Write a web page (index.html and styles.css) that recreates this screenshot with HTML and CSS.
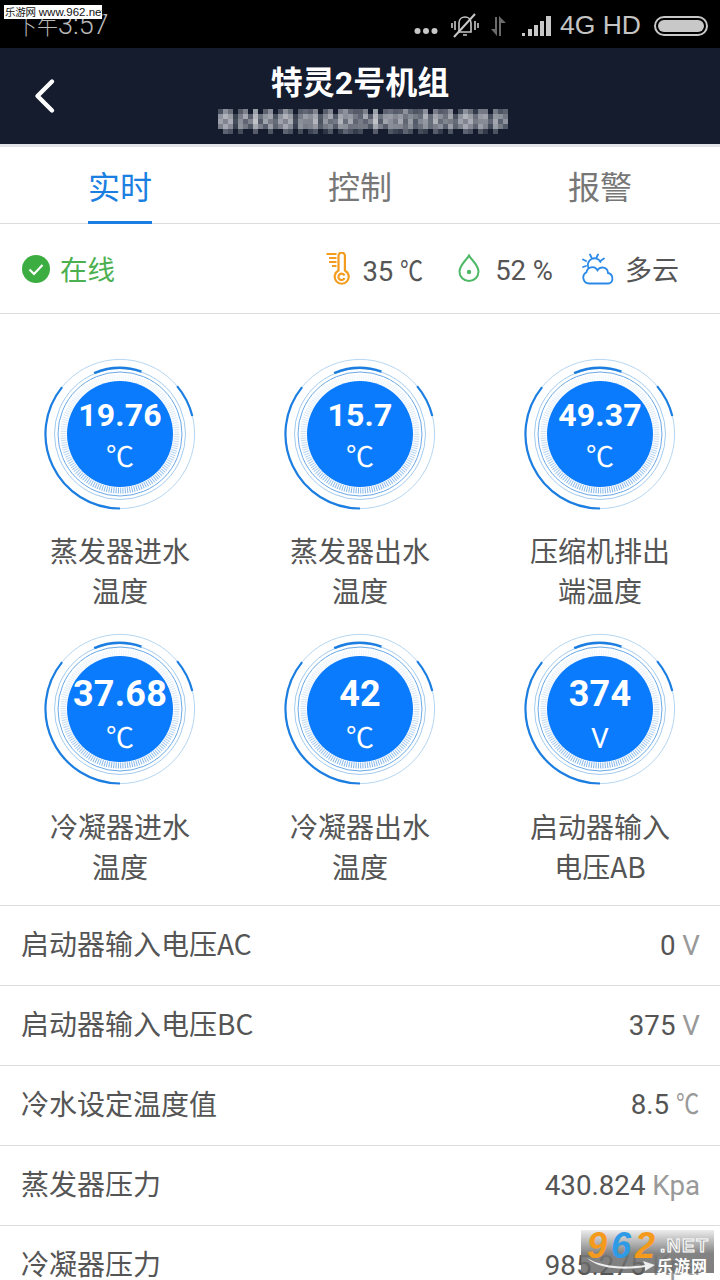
FILE: index.html
```html
<!DOCTYPE html>
<html lang="zh">
<head>
<meta charset="utf-8">
<title>特灵2号机组</title>
<link rel="stylesheet" href="styles.css">
</head>
<body>
<svg class="defs" width="0" height="0">
  <defs>
    <linearGradient id="tick-fade" gradientUnits="userSpaceOnUse" x1="0" y1="16" x2="0" y2="136">
      <stop offset="0" stop-color="#f0f6fc"/>
      <stop offset=".5" stop-color="#cfe2f6"/>
      <stop offset="1" stop-color="#7fb3e8"/>
    </linearGradient>
    <symbol id="gauge-ring" viewBox="0 0 152 152">
      <circle cx="76" cy="76" r="74.6" fill="none" stroke="#b5d6f3" stroke-width="1"/>
      <circle cx="76" cy="76" r="65.500" fill="none" stroke="#a4cbef" stroke-width="1"/>
      <circle cx="76" cy="76" r="62" fill="none" stroke="#6aa9e6" stroke-width="1"/>
      <circle cx="76" cy="76" r="56.500" fill="none" stroke="url(#tick-fade)" stroke-width="6" stroke-dasharray="1 1.3"/>
      <path d="M18.100 29.100A74.500 74.500 0 0 0 76 150.500" fill="none" stroke="#1b7ee0" stroke-width="2.200"/>
      <path d="M133.100 28.100A74.500 74.500 0 0 1 148.300 58" fill="none" stroke="#1b7ee0" stroke-width="2.200"/>
      <path d="M50.200 15.200A66 66 0 0 1 97.500 13.600" fill="none" stroke="#1b7ee0" stroke-width="2.500"/>
      <circle cx="76" cy="76" r="53" fill="#0a7bfc"/>
    </symbol>
    <pattern id="mosaic" width="60" height="25" patternUnits="userSpaceOnUse">
      <rect width="5" height="5" x="0" y="0" fill="#4a5160"/><rect width="5" height="5" x="5" y="0" fill="#8d919b"/><rect width="5" height="5" x="10" y="0" fill="#6b707d"/><rect width="5" height="5" x="20" y="0" fill="#565c6a"/><rect width="5" height="5" x="25" y="0" fill="#7c818c"/><rect width="5" height="5" x="35" y="0" fill="#9a9ea7"/><rect width="5" height="5" x="45" y="0" fill="#5c6270"/><rect width="5" height="5" x="50" y="0" fill="#888c97"/>
      <rect width="5" height="5" x="0" y="5" fill="#8f939d"/><rect width="5" height="5" x="5" y="5" fill="#b0b3ba"/><rect width="5" height="5" x="10" y="5" fill="#9a9da6"/><rect width="5" height="5" x="15" y="5" fill="#3d4452"/><rect width="5" height="5" x="20" y="5" fill="#777c88"/><rect width="5" height="5" x="25" y="5" fill="#a5a8b0"/><rect width="5" height="5" x="30" y="5" fill="#5a606e"/><rect width="5" height="5" x="35" y="5" fill="#b3b6bc"/><rect width="5" height="5" x="40" y="5" fill="#6d727f"/><rect width="5" height="5" x="45" y="5" fill="#92969f"/><rect width="5" height="5" x="50" y="5" fill="#a2a5ae"/><rect width="5" height="5" x="55" y="5" fill="#4c5361"/>
      <rect width="5" height="5" x="0" y="10" fill="#9ea1aa"/><rect width="5" height="5" x="5" y="10" fill="#80858f"/><rect width="5" height="5" x="10" y="10" fill="#a9acb4"/><rect width="5" height="5" x="15" y="10" fill="#454c5a"/><rect width="5" height="5" x="20" y="10" fill="#8b8f99"/><rect width="5" height="5" x="25" y="10" fill="#5f6573"/><rect width="5" height="5" x="30" y="10" fill="#7f848f"/><rect width="5" height="5" x="35" y="10" fill="#c0c2c8"/><rect width="5" height="5" x="40" y="10" fill="#555b69"/><rect width="5" height="5" x="45" y="10" fill="#9fa3ab"/><rect width="5" height="5" x="50" y="10" fill="#777c87"/><rect width="5" height="5" x="55" y="10" fill="#666b78"/>
      <rect width="5" height="5" x="0" y="15" fill="#7c818c"/><rect width="5" height="5" x="5" y="15" fill="#a5a8b0"/><rect width="5" height="5" x="10" y="15" fill="#888c96"/><rect width="5" height="5" x="15" y="15" fill="#3a4150"/><rect width="5" height="5" x="20" y="15" fill="#8f939c"/><rect width="5" height="5" x="25" y="15" fill="#727783"/><rect width="5" height="5" x="30" y="15" fill="#4e5563"/><rect width="5" height="5" x="35" y="15" fill="#a6a9b1"/><rect width="5" height="5" x="40" y="15" fill="#7a7f8a"/><rect width="5" height="5" x="45" y="15" fill="#585e6c"/><rect width="5" height="5" x="50" y="15" fill="#9b9ea7"/><rect width="5" height="5" x="55" y="15" fill="#5d6370"/>
      <rect width="5" height="5" x="5" y="20" fill="#5d6370"/><rect width="5" height="5" x="10" y="20" fill="#4a5160"/><rect width="5" height="5" x="20" y="20" fill="#444b59"/><rect width="5" height="5" x="35" y="20" fill="#565c6a"/><rect width="5" height="5" x="50" y="20" fill="#4e5563"/>
    </pattern>
    <pattern id="mosaic-wide" href="#mosaic" width="85" height="25" patternUnits="userSpaceOnUse"></pattern>
  </defs>
</svg>

<div class="phone">
  <div class="statusbar">
    <span class="clock"><span class="clock-cn">下午</span>3:57</span>
    <div class="status-right">
      <svg class="dots" width="24" height="8" viewBox="0 0 24 8"><circle cx="3.500" cy="4" r="3" fill="#c8c8c8"/><circle cx="12" cy="4" r="3" fill="#c8c8c8"/><circle cx="20.500" cy="4" r="3" fill="#c8c8c8"/></svg>
      <svg class="mute" width="30" height="26" viewBox="0 0 30 26" fill="none" stroke="#c8c8c8" stroke-width="1.600"><path d="M9 19V10c0-4 3-6 6-6s6 2 6 6v9H9zM13 22h4"/><path d="M5 8v9M2 10v5M25 8v9M28 10v5"/><path d="M25 1L4 24" stroke-width="2"/></svg>
      <svg class="arrows" width="20" height="20" viewBox="0 0 20 20" fill="#6a6a6a"><path d="M5 1h2v19L1 13h4zM9 0l7 7h-5v13H9z"/></svg>
      <svg class="signal" width="30" height="20" viewBox="0 0 30 20" fill="#c8c8c8"><rect x="0" y="17" width="3" height="3"/><rect x="6" y="13" width="4" height="7"/><rect x="12" y="9" width="4" height="11"/><rect x="18" y="5" width="4" height="15"/><rect x="24" y="0" width="5" height="20"/></svg>
      <span class="net">4G HD</span>
      <div class="battery"><div class="battery-fill"></div></div>
    </div>
    <div class="wm-top"><span class="wm-top-cn">乐游网</span> www.962.net</div>
  </div>

  <header class="header">
    <svg class="back" width="24" height="36" viewBox="0 0 24 36" fill="none" stroke="#fff" stroke-width="4.400" stroke-linecap="round" stroke-linejoin="round"><path d="M19 3.500L4.500 18 19 32.500"/></svg>
    <h1 class="title">特灵2号机组</h1>
    <svg class="mosaic" width="290" height="25" viewBox="0 0 290 25"><rect width="290" height="25" fill="url(#mosaic)"/><rect width="290" height="25" fill="url(#mosaic-wide)" opacity=".55"/></svg>
  </header>

  <nav class="tabs">
    <div class="tab tab-active"><span class="tab-label">实时</span></div>
    <div class="tab"><span class="tab-label">控制</span></div>
    <div class="tab"><span class="tab-label">报警</span></div>
  </nav>

  <section class="infobar">
    <div class="online">
      <svg width="28" height="28" viewBox="0 0 28 28"><circle cx="14" cy="14" r="14" fill="#3cae41"/><path d="M7.500 14.500l4.500 4.500 8.500-9" fill="none" stroke="#fff" stroke-width="2.200"/></svg>
      <span class="online-text">在线</span>
    </div>
    <div class="metrics">
      <div class="metric metric-temp">
        <svg width="25" height="33" viewBox="0 0 25 33" fill="none" stroke="#f39c1f" stroke-width="2.200"><path d="M.5 2h10M3 6h7.500M3 10h7.500M6 14h4.500"/><path d="M12.500 18.500V3.800a3.200 3.200 0 0 1 6.400 0V18.500a7 7 0 1 1-6.400 0z"/><path d="M18.500 23.500a3.200 3.200 0 1 0 0 2.600"/></svg>
        <span>35 <span class="deg deg-sm">℃</span></span>
      </div>
      <div class="metric metric-hum">
        <svg width="22" height="29" viewBox="0 0 22 29" fill="none" stroke="#4db967" stroke-width="2"><path d="M11 1.500c2 4 9.500 9.500 9.500 16a9.500 9.500 0 0 1-19 0c0-6.500 7.500-12 9.500-16z"/><circle cx="11" cy="18" r="2.200" fill="#4db967" stroke="none"/></svg>
        <span class="hum-text">52 %</span>
      </div>
      <div class="metric metric-sky">
        <svg width="33" height="32" viewBox="0 0 33 32" fill="none" stroke="#2b8ae8" stroke-width="1.800" stroke-linecap="round"><path d="M8 1.500l1.500 3M16 1.500l-1.500 3M1 6.500l3 1.500M22 5.500l-3 2M1 14l3-1"/><path d="M6.500 15a6.500 6.500 0 0 1 12-6"/><path d="M7 30.500a6 6 0 0 1-2.500-11.300c.5-5 8-7.500 11-2 3-4.500 10-3 10.500 2.800 5.500 1 6 9.500.500 10.500z"/></svg>
        <span class="sky-text">多云</span>
      </div>
    </div>
  </section>

  <section class="gauges">
    <div class="gauge-cell">
      <div class="gauge"><svg class="gauge-ring"><use href="#gauge-ring"/></svg><div class="gauge-text"><span class="gauge-value">19.76</span><span class="gauge-unit">℃</span></div></div>
      <p class="gauge-label">蒸发器进水<br>温度</p>
    </div>
    <div class="gauge-cell">
      <div class="gauge"><svg class="gauge-ring"><use href="#gauge-ring"/></svg><div class="gauge-text"><span class="gauge-value">15.7</span><span class="gauge-unit">℃</span></div></div>
      <p class="gauge-label">蒸发器出水<br>温度</p>
    </div>
    <div class="gauge-cell">
      <div class="gauge"><svg class="gauge-ring"><use href="#gauge-ring"/></svg><div class="gauge-text"><span class="gauge-value">49.37</span><span class="gauge-unit">℃</span></div></div>
      <p class="gauge-label">压缩机排出<br>端温度</p>
    </div>
    <div class="gauge-cell gauge-cell-big">
      <div class="gauge"><svg class="gauge-ring"><use href="#gauge-ring"/></svg><div class="gauge-text"><span class="gauge-value">37.68</span><span class="gauge-unit">℃</span></div></div>
      <p class="gauge-label">冷凝器进水<br>温度</p>
    </div>
    <div class="gauge-cell gauge-cell-big">
      <div class="gauge"><svg class="gauge-ring"><use href="#gauge-ring"/></svg><div class="gauge-text"><span class="gauge-value">42</span><span class="gauge-unit">℃</span></div></div>
      <p class="gauge-label">冷凝器出水<br>温度</p>
    </div>
    <div class="gauge-cell gauge-cell-big">
      <div class="gauge"><svg class="gauge-ring"><use href="#gauge-ring"/></svg><div class="gauge-text"><span class="gauge-value">374</span><span class="gauge-unit">V</span></div></div>
      <p class="gauge-label">启动器输入<br>电压AB</p>
    </div>
  </section>

  <section class="list">
    <div class="row"><span class="row-label">启动器输入电压AC</span><span class="row-value">0 <em>V</em></span></div>
    <div class="row"><span class="row-label">启动器输入电压BC</span><span class="row-value">375 <em>V</em></span></div>
    <div class="row"><span class="row-label">冷水设定温度值</span><span class="row-value row-value-deg">8.5 <em class="deg">℃</em></span></div>
    <div class="row"><span class="row-label">蒸发器压力</span><span class="row-value">430.824 <em>Kpa</em></span></div>
    <div class="row"><span class="row-label">冷凝器压力</span><span class="row-value">985.275 <em>Kpa</em></span></div>
  </section>

  <div class="wm-bottom">
    <svg class="wm-swoosh" width="70" height="14" viewBox="0 0 70 14"><path d="M0 0c14 9 40 10 58 7l-2-4 12 4-10 6 0-4C40 12 12 12 0 0z" fill="#eee"/></svg>
    <div class="wm-logo"><span class="wm-o">9</span><span class="wm-b">6</span><span class="wm-o">2</span></div>
    <div class="wm-net">.NET</div>
    <div class="wm-cn">乐游网</div>
  </div>
</div>
</body>
</html>
```

FILE: styles.css
```css
* { box-sizing: border-box; }
html, body { margin: 0; padding: 0; background: #fff; }
body { font-family: Roboto, "Noto Sans CJK SC", sans-serif; color: #555; }
.defs { position: absolute; }
.phone { position: relative; width: 720px; height: 1280px; overflow: hidden; background: #fff; }

/* status bar */
.statusbar { position: relative; height: 48px; background: #000; display: flex; align-items: center; justify-content: space-between; padding: 3px 12px 0 16px; color: #c8c8c8; }
.clock { font-size: 27px; font-weight: 300; color: #b9b9b9; line-height: 1; }
.clock-cn { font-size: 21px; }
.status-right { display: flex; align-items: center; }
.dots { margin: 10px 12px 0 0; }
.mute { margin-right: 10px; }
.arrows { margin-right: 12px; }
.signal { margin: 0 8px 0 0; }
.net { font-family: "Liberation Sans", sans-serif; font-size: 26.500px; margin-right: 13px; color: #c4c4c4; line-height: 1; }
.battery { width: 54px; height: 20px; border: 2px solid #c8c8c8; border-radius: 10px; padding: 2px; }
.battery-fill { width: 100%; height: 100%; border-radius: 6px; background: #c8c8c8; }
.wm-top { position: absolute; left: 4px; top: 5px; width: 98px; height: 14px; background: #fff; color: #111; font: 11.500px/14px "Liberation Sans", sans-serif; white-space: nowrap; padding-left: 1px; }
.wm-top-cn { font-family: "Noto Sans CJK SC", sans-serif; font-size: 10.500px; letter-spacing: -.3px; }

/* header */
.header { position: relative; height: 99px; background: #141c2e; border-bottom: 3px solid #e1e3e8; display: flex; flex-direction: column; align-items: center; padding-top: 15px; }
.back { position: absolute; left: 33px; top: 30px; }
.title { margin: 0; font-size: 32px; line-height: 40px; font-weight: 700; color: #fff; }
.mosaic { margin-top: 6px; margin-left: 5px; }

/* tabs */
.tabs { display: grid; grid-template-columns: repeat(3, 240px); height: 77px; border-bottom: 1px solid #ddd; }
.tab { display: flex; justify-content: center; }
.tab-label { display: block; height: 77px; width: 64px; text-align: center; font-size: 32px; line-height: 82px; color: #777; white-space: nowrap; }
.tab-active .tab-label { color: #1a7fe0; border-bottom: 3px solid #1a7fe0; }

/* info bar */
.infobar { height: 90px; border-bottom: 1px solid #ddd; display: flex; align-items: center; justify-content: space-between; padding: 0 41px 0 22px; }
.online { display: flex; align-items: center; gap: 10px; color: #4caf50; }
.online-text { font: 27.500px/40px "Noto Sans CJK SC", sans-serif; margin-bottom: 2px; }
.metrics { display: flex; align-items: center; }
.metric { display: flex; align-items: center; font-size: 27.500px; color: #555; }
.metric-temp { gap: 11px; margin-right: 35px; }
.metric-hum { gap: 15px; margin-right: 29px; }
.metric-sky { gap: 10px; }
.hum-text { margin-top: 4px; }
.sky-text { font: 27px/40px "Noto Sans CJK SC", sans-serif; }
.deg { display: inline-block; width: 24px; font-style: normal; white-space: nowrap; transform: scaleX(.84); transform-origin: left center; }
.deg-sm { width: 23px; }

/* gauges */
.gauges { display: grid; grid-template-columns: repeat(3, 240px); grid-auto-rows: 275.500px; padding-top: 43.500px; height: 591px; }
.gauge-cell { display: flex; flex-direction: column; align-items: center; }
.gauge { position: relative; width: 152px; height: 152px; }
.gauge-ring { display: block; width: 152px; height: 152px; }
.gauge-text { position: absolute; inset: 0; display: flex; flex-direction: column; align-items: center; color: #fff; }
.gauge-value { font-size: 32px; font-weight: 700; line-height: 40px; margin-top: 37.500px; letter-spacing: .2px; }
.gauge-unit { font-size: 28px; line-height: 40px; margin-top: 3px; }
.gauge-cell-big .gauge-value { font-size: 36px; margin-top: 41px; }
.gauge-cell-big .gauge-unit { margin-top: 5px; }
.gauge-label { margin: 20.500px 0 0; font: 28px/40px "Noto Sans CJK SC", sans-serif; text-align: center; color: #555; }

/* list */
.list { border-top: 1px solid #ddd; }
.row { height: 80px; border-bottom: 1px solid #ddd; display: flex; align-items: center; justify-content: space-between; padding: 0 20px 0 21px; font-size: 27.700px; color: #555; }
.row-label { font: 28px/40px "Noto Sans CJK SC", sans-serif; margin-bottom: 6px; }
.row-value { line-height: 40px; }
.row-value-deg { margin-bottom: 2px; }
.row em { font-style: normal; color: #999; }

/* bottom watermark */
.wm-bottom { position: absolute; left: 581px; top: 1230px; width: 133px; height: 43px; background: linear-gradient(180deg, rgba(235,235,235,.9) 0%, rgba(120,120,120,.92) 55%, rgba(95,95,95,.8) 100%); }
.wm-swoosh { position: absolute; left: 6px; top: 28px; }
.wm-logo { position: absolute; left: 6px; top: 1px; white-space: nowrap; font: italic 700 36px/30px "Liberation Sans", sans-serif; letter-spacing: 4px; }
.wm-o { color: #f49a1c; }
.wm-b { color: #2f9be6; }
.wm-net { position: absolute; left: 79px; top: 5px; font: 700 19px/22px "Liberation Sans", sans-serif; color: #a8a8a8; -webkit-text-stroke: 1px #fff; letter-spacing: 1.500px; white-space: nowrap; }
.wm-cn { position: absolute; left: 76px; top: 26px; font: 700 16px/18px "Noto Sans CJK SC", sans-serif; color: #fff; letter-spacing: 1px; white-space: nowrap; }
```
